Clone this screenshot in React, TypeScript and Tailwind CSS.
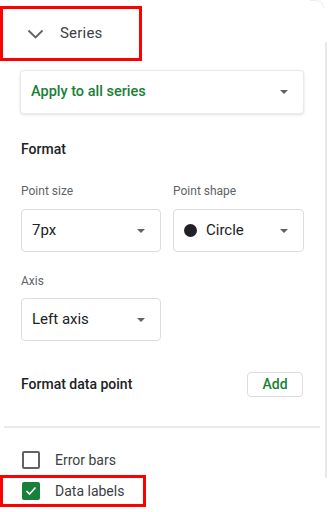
import React from 'react';

const Caret = () => (
  <svg width="8" height="4" viewBox="0 0 8 4" className="shrink-0">
    <path d="M0 0h8L4 4z" fill="#5f6368" />
  </svg>
);

const Select: React.FC<{ className?: string; children: React.ReactNode }> = ({ className, children }) => (
  <div
    className={`flex items-center justify-between border border-[#dadce0] rounded-[4px] bg-white pl-[10px] pr-[15px] ${className ?? ''}`}
  >
    <div className="flex items-center">{children}</div>
    <Caret />
  </div>
);

export default function App() {
  return (
    <div className="w-[328px] h-[512px] bg-white relative overflow-hidden" style={{ fontFamily: 'Roboto, "Noto Sans", sans-serif' }}>
      {/* scrollbar track on the right */}
      <div className="absolute right-[1px] top-[42px] h-[436px] w-[2px] bg-[#e8e8ea]" />
      <div className="absolute right-[4px] top-0 w-[14px] h-[8px] rounded-tr-[8px] border-t border-r border-[#eeeeee]" />

      <div className="pt-[6px]">
        <div className="flex items-center w-[142px] h-[55px] border-[3px] border-[#ff0000] pl-[24px]">
          <svg width="17" height="10" viewBox="0 0 17 10">
            <path d="M1.5 1.5l7 7 7-7" stroke="#5f6368" strokeWidth="1.8" fill="none" />
          </svg>
          <span className="ml-[16px] text-[15px] text-[#3c4043] tracking-[0.2px]">Series</span>
        </div>
      </div>

      <div className="pl-[20px] pr-[24px]">
        <Select className="mt-[9px] h-[44px] shadow-[0_1px_3px_rgba(0,0,0,0.12)] border-[#e8eaed]">
          <span className="text-[14.5px] font-medium text-[#188038]">Apply to all series</span>
        </Select>

        <div className="mt-[25px] text-[14px] font-medium text-[#202124] pl-[1px]">Format</div>

        <div className="mt-[22px] flex gap-[12px] pl-[1px]">
          <div className="w-[140px]">
            <div className="text-[12px] text-[#5f6368]">Point size</div>
            <Select className="mt-[9px] h-[43px]">
              <span className="text-[15px] text-[#202124]">7px</span>
            </Select>
          </div>
          <div className="w-[131px]">
            <div className="text-[12px] text-[#5f6368]">Point shape</div>
            <Select className="mt-[9px] h-[43px]">
              <span className="w-[13px] h-[13px] rounded-full bg-[#202124] mr-[9px]" />
              <span className="text-[15px] text-[#202124]">Circle</span>
            </Select>
          </div>
        </div>

        <div className="mt-[20px] pl-[1px]">
          <div className="text-[12px] text-[#5f6368]">Axis</div>
          <Select className="mt-[8px] h-[43px] w-[140px]">
            <span className="text-[15px] text-[#202124]">Left axis</span>
          </Select>
        </div>

        <div className="mt-[31px] flex items-center justify-between pl-[1px]">
          <span className="text-[14px] font-medium text-[#202124]">Format data point</span>
          <button className="h-[25px] w-[56px] border border-[#dadce0] rounded-[4px] text-[14px] font-medium text-[#188038] mr-[1px]">
            Add
          </button>
        </div>
      </div>

      <div className="mt-[29px] ml-[4px] w-[316px] h-[2px] bg-[#e8eaed]" />

      <div className="mt-[22px] flex items-center pl-[22px] h-[20px]">
        <span className="w-[18px] h-[18px] border-2 border-[#5f6368] rounded-[2px]" />
        <span className="ml-[15px] text-[14px] text-[#3c4043]">Error bars</span>
      </div>

      <div className="mt-[5px] flex items-center w-[146px] h-[32px] border-[3px] border-[#ff0000] pl-[19px]">
        <span className="w-[18px] h-[18px] rounded-[2px] bg-[#188038] flex items-center justify-center">
          <svg width="12" height="10" viewBox="0 0 12 10">
            <path d="M1.5 5l3 3 6-6.5" stroke="white" strokeWidth="1.6" fill="none" />
          </svg>
        </span>
        <span className="ml-[15px] text-[14px] text-[#3c4043]">Data labels</span>
      </div>
    </div>
  );
}
